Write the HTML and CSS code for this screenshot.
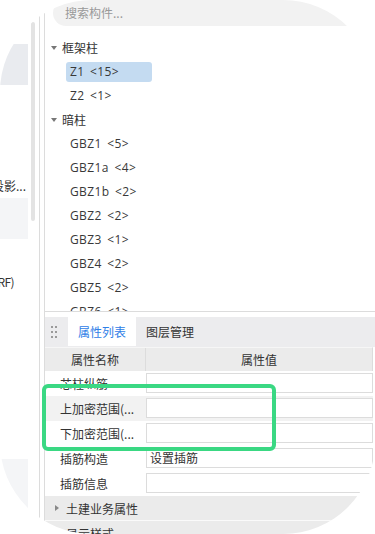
FILE: index.html
```html
<!DOCTYPE html>
<html lang="zh-CN">
<head>
<meta charset="utf-8">
<title>构件属性</title>
<link rel="stylesheet" href="styles.css">
</head>
<body>
<div class="frame">
  <aside class="side">
    <div class="blk blk-a"></div>
    <div class="stxt stxt-1"><span>投影...</span></div>
    <div class="blk blk-b"></div>
    <div class="stxt stxt-2"><span>(RF)</span></div>
    <div class="blk blk-c"></div>
  </aside>
  <div class="track"><div class="thumb"></div></div>
  <div class="gutter"></div>
  <main class="main">
    <div class="search">搜索构件...</div>
    <div class="tree">
      <div class="grp"><i class="tri-down"></i>框架柱</div>
      <div class="item"><span class="sel">Z1 &lt;15&gt;</span></div>
      <div class="item"><span>Z2 &lt;1&gt;</span></div>
      <div class="grp"><i class="tri-down"></i>暗柱</div>
      <div class="item"><span>GBZ1 &lt;5&gt;</span></div>
      <div class="item"><span>GBZ1a &lt;4&gt;</span></div>
      <div class="item"><span>GBZ1b &lt;2&gt;</span></div>
      <div class="item"><span>GBZ2 &lt;2&gt;</span></div>
      <div class="item"><span>GBZ3 &lt;1&gt;</span></div>
      <div class="item"><span>GBZ4 &lt;2&gt;</span></div>
      <div class="item"><span>GBZ5 &lt;2&gt;</span></div>
      <div class="item"><span>GBZ6 &lt;1&gt;</span></div>
    </div>
    <div class="tabs">
      <div class="handle"><i></i><i></i><i></i><i></i><i></i><i></i></div>
      <div class="tab active">属性列表</div>
      <div class="tab">图层管理</div>
    </div>
    <div class="props">
      <div class="phead"><div class="hc">属性名称</div><div class="hc hv">属性值</div></div>
      <div class="prow"><div class="pl">芯柱纵筋</div><div class="pv"><div class="box"></div></div></div>
      <div class="prow alt"><div class="pl">上加密范围(...</div><div class="pv"><div class="box"></div></div></div>
      <div class="prow"><div class="pl">下加密范围(...</div><div class="pv"><div class="box"></div></div></div>
      <div class="prow"><div class="pl">插筋构造</div><div class="pv"><div class="box">设置插筋</div></div></div>
      <div class="prow"><div class="pl">插筋信息</div><div class="pv"><div class="box"></div></div></div>
      <div class="pgrp"><i class="tri-right"></i>土建业务属性</div>
      <div class="pgrp"><i class="tri-right"></i>显示样式</div>
    </div>
  </main>
  <div class="mark"></div>
</div>
</body>
</html>
```
FILE: styles.css
```css
* { box-sizing: border-box; margin: 0; padding: 0; }
html, body { background: #fff; }
body {
  font-family: "Noto Sans CJK SC", "Noto Sans", sans-serif;
  font-size: 12px;
  color: #333;
}
.frame {
  position: relative;
  width: 375px;
  height: 534px;
  border-radius: 92px;
  overflow: hidden;
  display: flex;
  background: #fff;
}
.side {
  width: 28px;
  flex: none;
  display: flex;
  flex-direction: column;
  padding-top: 44px;
  overflow: hidden;
}
.blk { flex: none; }
.blk-a { height: 41px; background: #e9ebef; }
.blk-b { height: 41px; background: #f4f5f7; }
.blk-c { height: 80px; background: #f4f5f7; margin-top: 165px; }
.stxt {
  height: 24px;
  line-height: 24px;
  display: flex;
  justify-content: flex-end;
  white-space: nowrap;
  padding-right: 2px;
  color: #333;
}
.stxt-1 { margin-top: 89px; }
.stxt-2 { margin-top: 31px; padding-right: 14px; letter-spacing: -0.6px; }
.track {
  width: 11px;
  flex: none;
  padding: 22px 0 0 3px;
}
.thumb {
  width: 4px;
  height: 199px;
  background: #e3e3e3;
  border-radius: 2px;
}
.gutter {
  width: 5px;
  flex: none;
  border-left: 1px solid #dcdcdc;
}
.main {
  flex: 1;
  border-left: 1px solid #dcdcdc;
  display: flex;
  flex-direction: column;
}
.search {
  height: 26px;
  margin-left: 8px;
  background: #f2f2f2;
  border-radius: 13px 0 0 13px;
  padding-left: 12px;
  line-height: 26px;
  color: #999;
}
.tree {
  height: 286px;
  padding-top: 10px;
  border-bottom: 1px solid #dcdcdc;
  overflow: hidden;
  flex: none;
}
.grp {
  height: 24px;
  line-height: 24px;
  display: flex;
  align-items: center;
  padding-left: 6px;
}
.tri-down {
  width: 0; height: 0;
  border-left: 3px solid transparent;
  border-right: 3px solid transparent;
  border-top: 4px solid #777;
  margin-right: 5px;
}
.tri-right {
  width: 0; height: 0;
  border-top: 3px solid transparent;
  border-bottom: 3px solid transparent;
  border-left: 4px solid #888;
  margin-right: 7px;
}
.item {
  height: 24px;
  padding: 2px 0 2px 21px;
}
.item span {
  display: inline-block;
  height: 20px;
  line-height: 20px;
  padding-left: 4px;
  font-family: "Open Sans", "Noto Sans CJK SC", sans-serif;
  color: #383838;
  letter-spacing: 0.4px;
  word-spacing: 2px;
}
.item .sel {
  width: 86px;
  background: #c4dbf1;
  border-radius: 3px;
}
.tabs {
  margin-top: 5px;
  height: 30px;
  background: #ececee;
  display: flex;
  align-items: stretch;
  padding-bottom: 1px;
}
.handle {
  width: 23px;
  display: grid;
  grid-template-columns: 2px 2px;
  grid-auto-rows: 2px;
  gap: 3px 2px;
  align-content: center;
  padding-left: 6px;
}
.handle i { background: #9a9a9a; }
.tab {
  padding: 0 10px;
  line-height: 29px;
  color: #333;
}
.tab.active { background: #fff; color: #2f80e7; }
.props { width: 328px; }
.phead {
  height: 24px;
  background: #ebebeb;
  display: grid;
  grid-template-columns: 100px 1fr;
  border-top: 1px solid #f6f6f6;
  border-right: 1px solid #dcdcdc;
}
.hc { text-align: center; line-height: 23px; }
.hv { border-left: 1px solid #dcdcdc; }
.prow {
  height: 25px;
  display: grid;
  grid-template-columns: 101px 1fr;
}
.prow.alt { background: #f2f2f2; }
.pl { padding-left: 15px; line-height: 25px; white-space: nowrap; }
.pv { padding: 2px 0 3px; }
.box {
  height: 20px;
  border: 1px solid #dcdcdc;
  background: #fff;
  padding-left: 3px;
  line-height: 18px;
}
.pgrp {
  height: 25px;
  background: #ebebeb;
  border-bottom: 1px solid #fafafa;
  display: flex;
  align-items: center;
  padding-left: 10px;
  width: 331px;
}
.mark {
  position: absolute;
  left: 42px;
  top: 384px;
  width: 234px;
  height: 67px;
  border: 4px solid #3ad883;
  border-radius: 6px;
}
```
